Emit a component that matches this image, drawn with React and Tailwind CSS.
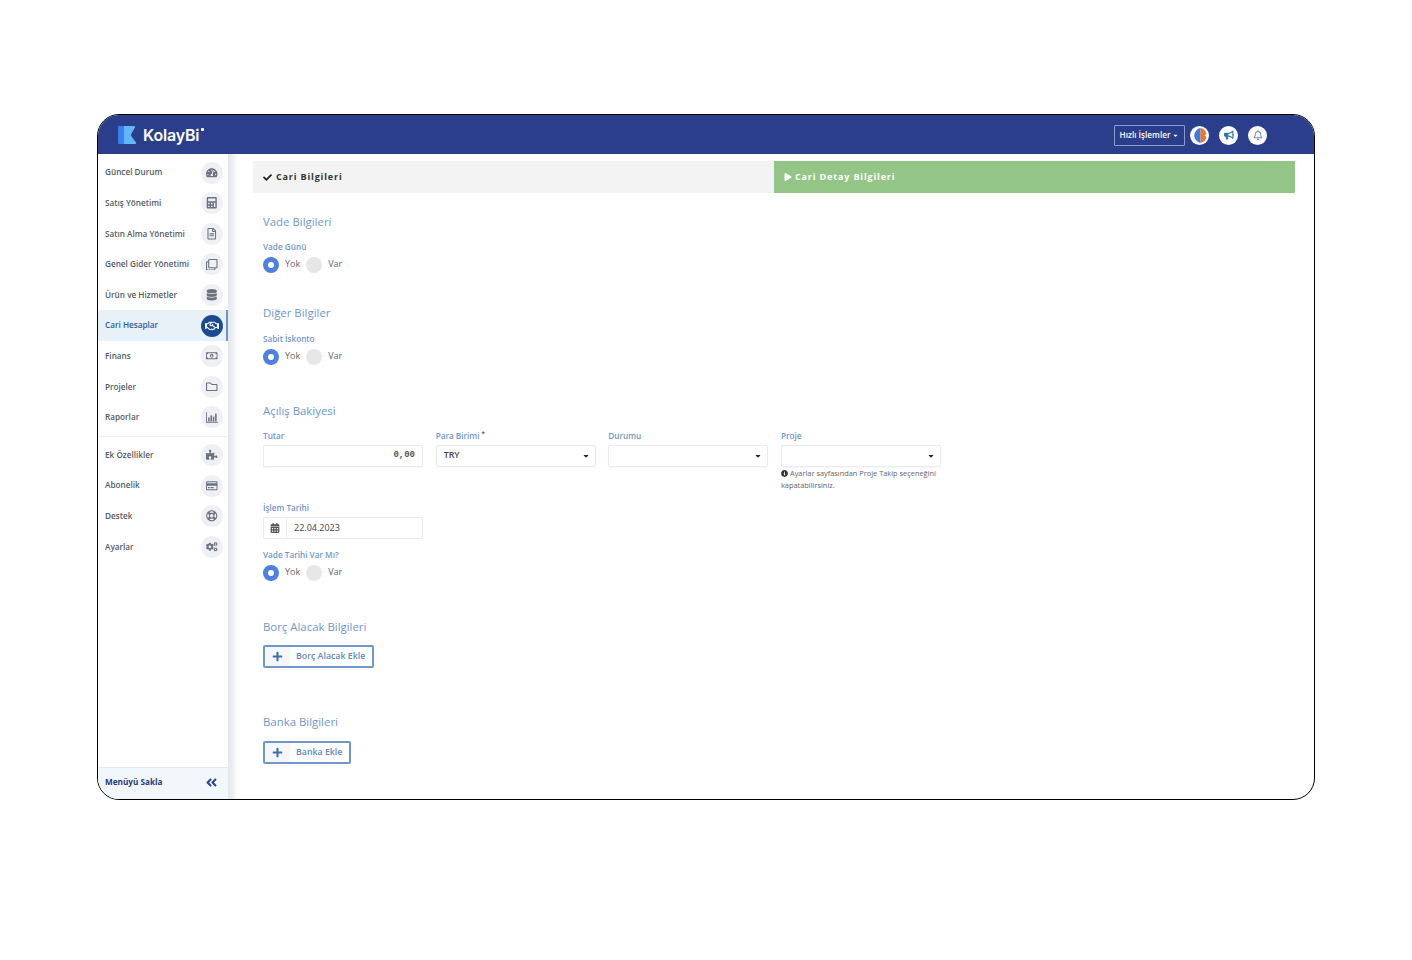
import React from 'react';
import {
  FaAngleDoubleLeft, FaBullhorn, FaCalculator, FaCalendarAlt, FaCheck, FaCogs, FaDatabase, FaInfoCircle,
  FaPlay, FaPlus, FaPuzzlePiece, FaRegBell, FaRegClone, FaRegCreditCard, FaRegFileAlt, FaRegFolder,
  FaRegHandshake, FaRegLifeRing, FaRegMoneyBillAlt, FaTachometerAlt, FaCaretDown,
} from 'react-icons/fa';

const ChartIcon = () => (
  <svg viewBox="0 0 14 12" className="w-[12px] h-[11px]" fill="#6b7280">
    <path d="M0 0h1v11h13v1H0z" />
    <rect x="2.5" y="6" width="1.8" height="4.5" />
    <rect x="5.2" y="3.5" width="1.8" height="7" />
    <rect x="7.9" y="5" width="1.8" height="5.5" />
    <rect x="10.6" y="1.5" width="1.8" height="9" />
  </svg>
);

const topItems = [
  { label: 'Güncel Durum', icon: <FaTachometerAlt /> },
  { label: 'Satış Yönetimi', icon: <FaCalculator /> },
  { label: 'Satın Alma Yönetimi', icon: <FaRegFileAlt /> },
  { label: 'Genel Gider Yönetimi', icon: <FaRegClone /> },
  { label: 'Ürün ve Hizmetler', icon: <FaDatabase /> },
  { label: 'Cari Hesaplar', icon: <FaRegHandshake />, active: true },
  { label: 'Finans', icon: <FaRegMoneyBillAlt /> },
  { label: 'Projeler', icon: <FaRegFolder /> },
  { label: 'Raporlar', icon: <ChartIcon /> },
];

const bottomItems = [
  { label: 'Ek Özellikler', icon: <FaPuzzlePiece /> },
  { label: 'Abonelik', icon: <FaRegCreditCard /> },
  { label: 'Destek', icon: <FaRegLifeRing /> },
  { label: 'Ayarlar', icon: <FaCogs /> },
];

const MenuItem = ({ label, icon, active }) => (
  <div className={`flex items-center justify-between h-[30.6px] pl-[7px] pr-[3px] border-r-2 ${active ? 'bg-[#e8f0f8] border-[#6f93d0]' : 'border-transparent'}`}>
    <span className={`text-[8.2px] font-semibold ${active ? 'text-[#2f5f9e]' : 'text-[#555b63]'}`}>{label}</span>
    <span className={`w-[22px] h-[22px] rounded-full flex items-center justify-center ${active ? 'bg-[#1d4a8f] text-white text-[14px]' : 'bg-[#eef0f3] text-[#6b7280] text-[11.5px]'}`}>
      {icon}
    </span>
  </div>
);

const Logo = () => (
  <div className="flex items-center gap-[6px]">
    <svg viewBox="0 0 19 18" className="w-[19px] h-[18px]">
      <path d="M1 0h8v18H1a1 1 0 0 1-1-1V1a1 1 0 0 1 1-1z" fill="#3b7fea" />
      <path d="M6 0h10a1 1 0 0 1 1 1.5L13.5 7.5a3 3 0 0 0 0 3L18 16.500a1 1 0 0 1-1 1.500H6z" fill="#62b8f6" />
    </svg>
    <span className="flex items-start text-[16px] font-semibold text-white tracking-[-0.2px] leading-none font-['Inter',sans-serif]">
      KolayBi
      <span className="ml-[2px] mt-[1px] w-[3px] h-[3px] rounded-[1px] bg-white" />
    </span>
  </div>
);

const Header = () => (
  <header className="h-[39px] shrink-0 bg-[#2a3e8c] flex items-center justify-between pt-px pl-[20px] pr-[47px]">
    <Logo />
    <div className="flex items-center gap-[10px]">
      <button className="h-[21px] w-[71px] -mr-[5px] border border-[#8d9bd0] rounded-[1px] text-white text-[8.2px] font-semibold flex items-center justify-center gap-[2px]">
        Hızlı İşlemler <FaCaretDown className="text-[7px]" />
      </button>
      <span className="w-[19px] h-[19px] rounded-full bg-white flex items-center justify-center">
        <svg viewBox="0 0 15 15" className="w-[15px] h-[15px]">
          <path d="M8.500 0.100A7.500 7.500 0 0 0 8.500 14.900z" fill="#3f7be0" />
          <path d="M8.500 0.100A7.500 7.500 0 0 1 8.500 14.900z" fill="#e8762c" />
          <path d="M15 5.500L12.500 7.500 15 9.500z" fill="#ffffff" />
        </svg>
      </span>
      <span className="w-[19px] h-[19px] rounded-full bg-white flex items-center justify-center text-[10px] text-[#2f7a9e]">
        <FaBullhorn />
      </span>
      <span className="w-[19px] h-[19px] rounded-full bg-white flex items-center justify-center text-[10px] text-[#6f8fc0]">
        <FaRegBell />
      </span>
    </div>
  </header>
);

const Sidebar = () => (
  <aside className="w-[130px] shrink-0 flex flex-col pt-[3.3px]">
    {topItems.map((item) => <MenuItem key={item.label} {...item} />)}
    <div className="h-px bg-[#eceef1] mt-[3px] mb-[3px]" />
    {bottomItems.map((item) => <MenuItem key={item.label} {...item} />)}
    <div className="mt-auto h-[32px] bg-[#f2f7fc] border-t border-[#e6e8ec] flex items-center justify-between pb-[2px] pl-[7px] pr-[10px]">
      <span className="text-[8.2px] font-bold text-[#27397f]">Menüyü Sakla</span>
      <FaAngleDoubleLeft className="text-[13px] text-[#2a4a90]" />
    </div>
  </aside>
);

const SectionTitle = ({ children, className }) => (
  <h3 className={`text-[11.4px] leading-[16px] text-[#6f97cc] ${className}`}>{children}</h3>
);

const Label = ({ children, required }) => (
  <label className="block text-[8.2px] leading-[12px] font-semibold text-[#6f97cc]">
    {children}
    {required && <sup className="ml-[2px] text-[#555]">*</sup>}
  </label>
);

const Radio = ({ className }) => (
  <div className={`flex items-center h-[16px] ${className}`}>
    <span className="w-[16px] h-[16px] rounded-full bg-[#4f7fe0] flex items-center justify-center">
      <span className="w-[6px] h-[6px] rounded-full bg-white" />
    </span>
    <span className="ml-[6px] text-[9px] text-[#666] -mt-[3px]">Yok</span>
    <span className="ml-[6px] w-[16px] h-[16px] rounded-full bg-[#e6e6e6]" />
    <span className="ml-[6px] text-[9px] text-[#666] -mt-[3px]">Var</span>
  </div>
);

const Select = ({ value }) => (
  <div className="mt-[3px] h-[22px] border border-[#e9ebee] rounded-[2px] shadow-[0_1px_2px_rgba(0,0,0,0.04)] flex items-center justify-between pl-[7px] pr-[5px]">
    <span className="text-[8.8px] font-semibold text-[#444]">{value}</span>
    <FaCaretDown className="text-[8px] text-[#222]" />
  </div>
);

const AddButton = ({ children, className }) => (
  <button className={`h-[23px] border-2 border-[#6f97cc] rounded-[2px] flex items-stretch ${className}`}>
    <span className="w-[25px] bg-[#f5f6f8] flex items-center justify-center text-[11px] text-[#3f6fae]"><FaPlus /></span>
    <span className="pl-[6px] pr-[7px] pt-px flex items-center text-[8.8px] font-semibold text-[#5f88bd]">{children}</span>
  </button>
);

const Tabs = () => (
  <div className="flex h-[32px] shrink-0">
    <div className="w-[521px] bg-[#f3f3f3] flex items-center gap-[4px] pl-[10px] text-[9px] font-bold text-[#333] tracking-[0.85px]">
      <FaCheck className="text-[9px] text-[#222]" /> Cari Bilgileri
    </div>
    <div className="flex-1 bg-[#93c686] flex items-center gap-[3px] pl-[10px] text-[9px] font-bold text-white tracking-[0.85px]">
      <FaPlay className="text-[8px]" /> Cari Detay Bilgileri
    </div>
  </div>
);

const Form = () => (
  <div className="pl-[10px]">
    <SectionTitle className="mt-[21px]">Vade Bilgileri</SectionTitle>
    <div className="mt-[11px]"><Label>Vade Günü</Label></div>
    <Radio className="mt-[4px]" />

    <SectionTitle className="mt-[32px]">Diğer Bilgiler</SectionTitle>
    <div className="mt-[12px]"><Label>Sabit İskonto</Label></div>
    <Radio className="mt-[4px]" />

    <SectionTitle className="mt-[38px]">Açılış Bakiyesi</SectionTitle>
    <div className="mt-[11px] grid grid-cols-[160px_160px_160px_160px] gap-x-[12.67px]">
      <div>
        <Label>Tutar</Label>
        <div className="mt-[3px] h-[22px] border border-[#e9ebee] rounded-[2px] shadow-[0_1px_2px_rgba(0,0,0,0.04)] flex items-center justify-end pr-[7px] text-[9px] font-bold text-[#555] font-['Liberation_Mono',monospace]">0,00</div>
      </div>
      <div>
        <Label required>Para Birimi</Label>
        <Select value="TRY" />
      </div>
      <div>
        <Label>Durumu</Label>
        <Select value="" />
      </div>
      <div>
        <Label>Proje</Label>
        <Select value="" />
        <p className="text-[7.4px] leading-[12px] text-[#666]">
          <FaInfoCircle className="inline text-[7px] text-[#333] mr-[2px] -mt-[1px]" />
          Ayarlar sayfasından Proje Takip seçeneğini kapatabilirsiniz.
        </p>
      </div>
    </div>

    <div className="mt-[11px] w-[160px]">
      <Label>İşlem Tarihi</Label>
      <div className="mt-[3px] h-[22px] border border-[#e9ebee] rounded-[2px] flex items-stretch">
        <span className="w-[23px] border-r border-[#e9ebee] flex items-center justify-center text-[10px] text-[#555]"><FaCalendarAlt /></span>
        <span className="pl-[7px] flex items-center text-[9px] text-[#444]">22.04.2023</span>
      </div>
    </div>
    <div className="mt-[10px]"><Label>Vade Tarihi Var Mı?</Label></div>
    <Radio className="mt-[4px]" />

    <SectionTitle className="mt-[38px]">Borç Alacak Bilgileri</SectionTitle>
    <AddButton className="mt-[10px]">Borç Alacak Ekle</AddButton>

    <SectionTitle className="mt-[46px]">Banka Bilgileri</SectionTitle>
    <AddButton className="mt-[11px]">Banka Ekle</AddButton>
  </div>
);

export default function App() {
  return (
    <div className="w-[1412px] h-[960px] bg-white pt-[114px] pl-[97px] font-['Open_Sans',sans-serif]">
      <div className="w-[1218px] h-[686px] border border-black rounded-[22px] overflow-hidden flex flex-col">
        <Header />
        <div className="flex-1 flex min-h-0">
          <Sidebar />
          <div className="w-[10px] shrink-0 bg-linear-to-r from-[#e2e5ea] via-[#eef0f3] to-white" />
          <main className="flex-1 min-w-0 pl-[15px] pr-[19px] pt-[7px] overflow-hidden">
            <Tabs />
            <Form />
          </main>
        </div>
      </div>
    </div>
  );
}
